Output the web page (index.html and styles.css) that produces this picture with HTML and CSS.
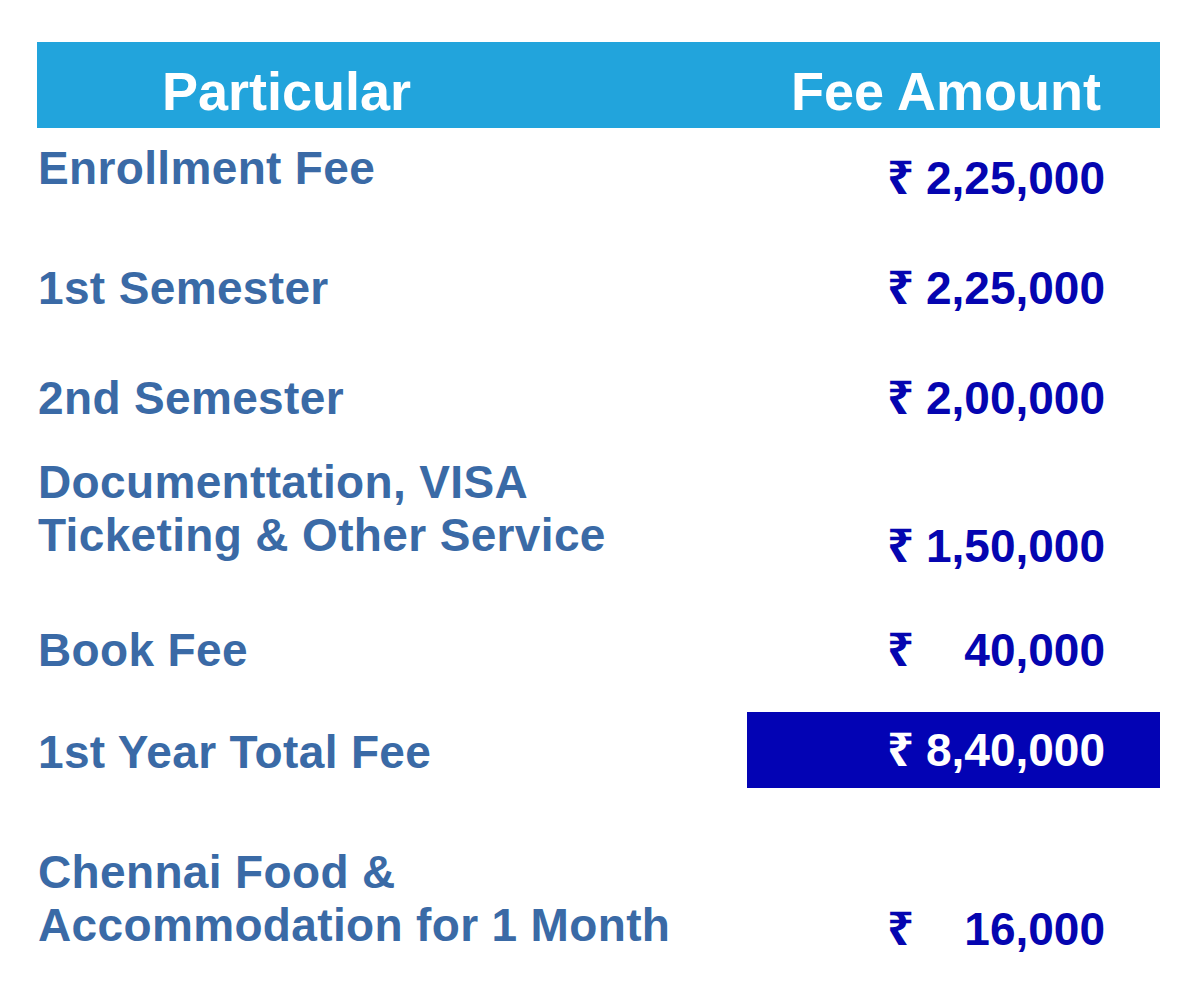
FILE: index.html
```html
<!DOCTYPE html>
<html lang="en">
<head>
<meta charset="utf-8">
<title>Fee Structure</title>
<link rel="stylesheet" href="styles.css">
</head>
<body>
<div class="fees">
  <div class="fees__head">
    <span>Particular</span>
    <span>Fee Amount</span>
  </div>

  <div class="row row--r1 row--drop10">
    <div class="label">Enrollment Fee</div>
    <div class="amt"><span class="rs">₹</span><span>2,25,000</span></div>
  </div>

  <div class="row row--r2">
    <div class="label">1st Semester</div>
    <div class="amt"><span class="rs">₹</span><span>2,25,000</span></div>
  </div>

  <div class="row row--r3">
    <div class="label">2nd Semester</div>
    <div class="amt"><span class="rs">₹</span><span>2,00,000</span></div>
  </div>

  <div class="row row--r4 row--drop11">
    <div class="label">Documenttation, VISA<br>Ticketing &amp; Other Service</div>
    <div class="amt"><span class="rs">₹</span><span>1,50,000</span></div>
  </div>

  <div class="row row--r5">
    <div class="label">Book Fee</div>
    <div class="amt"><span class="rs">₹</span><span>40,000</span></div>
  </div>

  <div class="row row--total">
    <div class="label">1st Year Total Fee</div>
    <div class="total-box">
      <div class="amt"><span class="rs">₹</span><span>8,40,000</span></div>
    </div>
  </div>

  <div class="row row--r7 row--drop4">
    <div class="label">Chennai Food &amp;<br>Accommodation for 1 Month</div>
    <div class="amt"><span class="rs">₹</span><span>16,000</span></div>
  </div>
</div>
</body>
</html>
```

FILE: styles.css
```css
html, body {
  margin: 0;
  padding: 0;
  background: #ffffff;
}

body {
  font-family: "Liberation Sans", Arial, sans-serif;
  font-weight: bold;
}

.fees {
  width: 1123px;
  margin-left: 37px;
  padding-top: 42px;
}

.fees__head {
  display: flex;
  justify-content: space-between;
  height: 86px;
  box-sizing: border-box;
  padding: 12px 59px 0 125px;
  background: #22a4dc;
  color: #ffffff;
  font-size: 54px;
  line-height: 74px;
}

.row {
  display: grid;
  grid-template-columns: 1fr 413px;
  align-items: end;
}

.label {
  color: #3a6aa6;
  font-size: 46px;
  line-height: 53px;
  letter-spacing: 0.35px;
  padding-left: 1px;
  white-space: nowrap;
}

.amt {
  display: flex;
  justify-content: space-between;
  align-items: baseline;
  height: 53px;
  width: 218px;
  margin-left: auto;
  margin-right: 55px;
  color: #0505b0;
  font-size: 46px;
  line-height: 53px;
  white-space: nowrap;
}

.rs {
  font-family: "Noto Sans", "DejaVu Sans", sans-serif;
  font-weight: bold;
  font-size: 47px;
  line-height: 40px;
}

.row--r1 { margin-top: 14px; }
.row--r2 { margin-top: 67px; }
.row--r3 { margin-top: 57px; }
.row--r4 { margin-top: 31px; }
.row--r5 { margin-top: 62px; }
.row--r7 { margin-top: 58px; }

.row--drop10 .amt { margin-bottom: -10px; }
.row--drop11 .amt { margin-bottom: -11px; }
.row--drop4 .amt { margin-bottom: -4px; }

.row--total {
  margin-top: 35px;
  align-items: start;
}

.row--total .label {
  padding-top: 14px;
}

.total-box {
  height: 76px;
  box-sizing: border-box;
  padding-top: 12px;
  background: #0303b4;
}

.total-box .amt {
  color: #ffffff;
}
```
